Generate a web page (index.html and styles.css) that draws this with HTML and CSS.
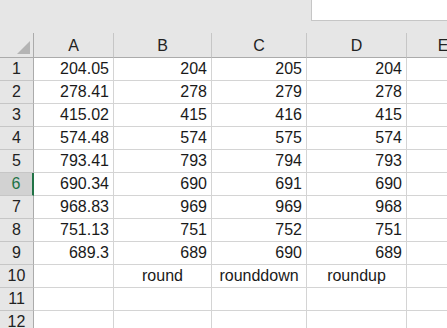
FILE: index.html
```html
<html>
<head>
    <title>Sheet1</title>
    <link rel="stylesheet" href="styles.css">
</head>

<body>
    <div class="topbar">
        <div class="namebox"></div>
    </div>

    <div class="sheet">
        <div class="corner"><span class="tri"></span></div>
        <div class="colhead">A</div>
        <div class="colhead">B</div>
        <div class="colhead">C</div>
        <div class="colhead">D</div>
        <div class="colhead">E</div>

        <div class="rowhead">1</div><div class="cell num">204.05</div><div class="cell num">204</div><div class="cell num">205</div><div class="cell num">204</div><div class="cell"></div>
        <div class="rowhead">2</div><div class="cell num">278.41</div><div class="cell num">278</div><div class="cell num">279</div><div class="cell num">278</div><div class="cell"></div>
        <div class="rowhead">3</div><div class="cell num">415.02</div><div class="cell num">415</div><div class="cell num">416</div><div class="cell num">415</div><div class="cell"></div>
        <div class="rowhead">4</div><div class="cell num">574.48</div><div class="cell num">574</div><div class="cell num">575</div><div class="cell num">574</div><div class="cell"></div>
        <div class="rowhead">5</div><div class="cell num">793.41</div><div class="cell num">793</div><div class="cell num">794</div><div class="cell num">793</div><div class="cell"></div>
        <div class="rowhead active">6</div><div class="cell num">690.34</div><div class="cell num">690</div><div class="cell num">691</div><div class="cell num">690</div><div class="cell"></div>
        <div class="rowhead">7</div><div class="cell num">968.83</div><div class="cell num">969</div><div class="cell num">969</div><div class="cell num">968</div><div class="cell"></div>
        <div class="rowhead">8</div><div class="cell num">751.13</div><div class="cell num">751</div><div class="cell num">752</div><div class="cell num">751</div><div class="cell"></div>
        <div class="rowhead">9</div><div class="cell num">689.3</div><div class="cell num">689</div><div class="cell num">690</div><div class="cell num">689</div><div class="cell"></div>
        <div class="rowhead">10</div><div class="cell"></div><div class="cell label">round</div><div class="cell label">rounddown</div><div class="cell label">roundup</div><div class="cell"></div>
        <div class="rowhead">11</div><div class="cell"></div><div class="cell"></div><div class="cell"></div><div class="cell"></div><div class="cell"></div>
        <div class="rowhead">12</div><div class="cell"></div><div class="cell"></div><div class="cell"></div><div class="cell"></div><div class="cell"></div>
    </div>
</body>
</html>
```

FILE: styles.css
```css
body {
    margin: 0;
    width: 447px;
    height: 328px;
    overflow: hidden;
    background: #ffffff;
    font-family: "Liberation Sans", "Noto Sans CJK SC", sans-serif;
    font-size: 16px;
    color: #1a1a1a;
}

.topbar {
    height: 33px;
    background: #e6e6e6;
    display: flex;
    justify-content: flex-end;
}

.namebox {
    width: 136px;
    height: 21px;
    background: #ffffff;
    border-left: 1px solid #c6c6c6;
    border-bottom: 1px solid #c6c6c6;
    box-sizing: border-box;
}

.sheet {
    display: grid;
    width: 480px;
    grid-template-columns: 34px 80px 98px 95px 100px 73px;
    grid-template-rows: 25px repeat(12, 23px);
}

.sheet > div {
    box-sizing: border-box;
    display: flex;
    align-items: center;
}

.corner {
    background: #e6e6e6;
    border-right: 1px solid #ababab;
    border-bottom: 1px solid #ababab;
    position: relative;
}

.tri {
    position: absolute;
    right: 3px;
    bottom: 3px;
    width: 0;
    height: 0;
    border-left: 13px solid transparent;
    border-bottom: 13px solid #b4b4b4;
}

.colhead {
    background: #e6e6e6;
    border-right: 1px solid #c6c6c6;
    border-bottom: 1px solid #ababab;
    justify-content: center;
    color: #222;
    padding-top: 2px;
}

.rowhead {
    background: #e6e6e6;
    border-right: 1px solid #ababab;
    border-bottom: 1px solid #c6c6c6;
    justify-content: center;
    color: #222;
}

.rowhead.active {
    background: #d2d2d2;
    color: #217346;
    border-right: 2px solid #217346;
}

.cell {
    border-right: 1px solid #d4d4d4;
    border-bottom: 1px solid #d4d4d4;
    padding: 0 4px;
}

.num {
    justify-content: flex-end;
}

.label {
    justify-content: center;
}
```
